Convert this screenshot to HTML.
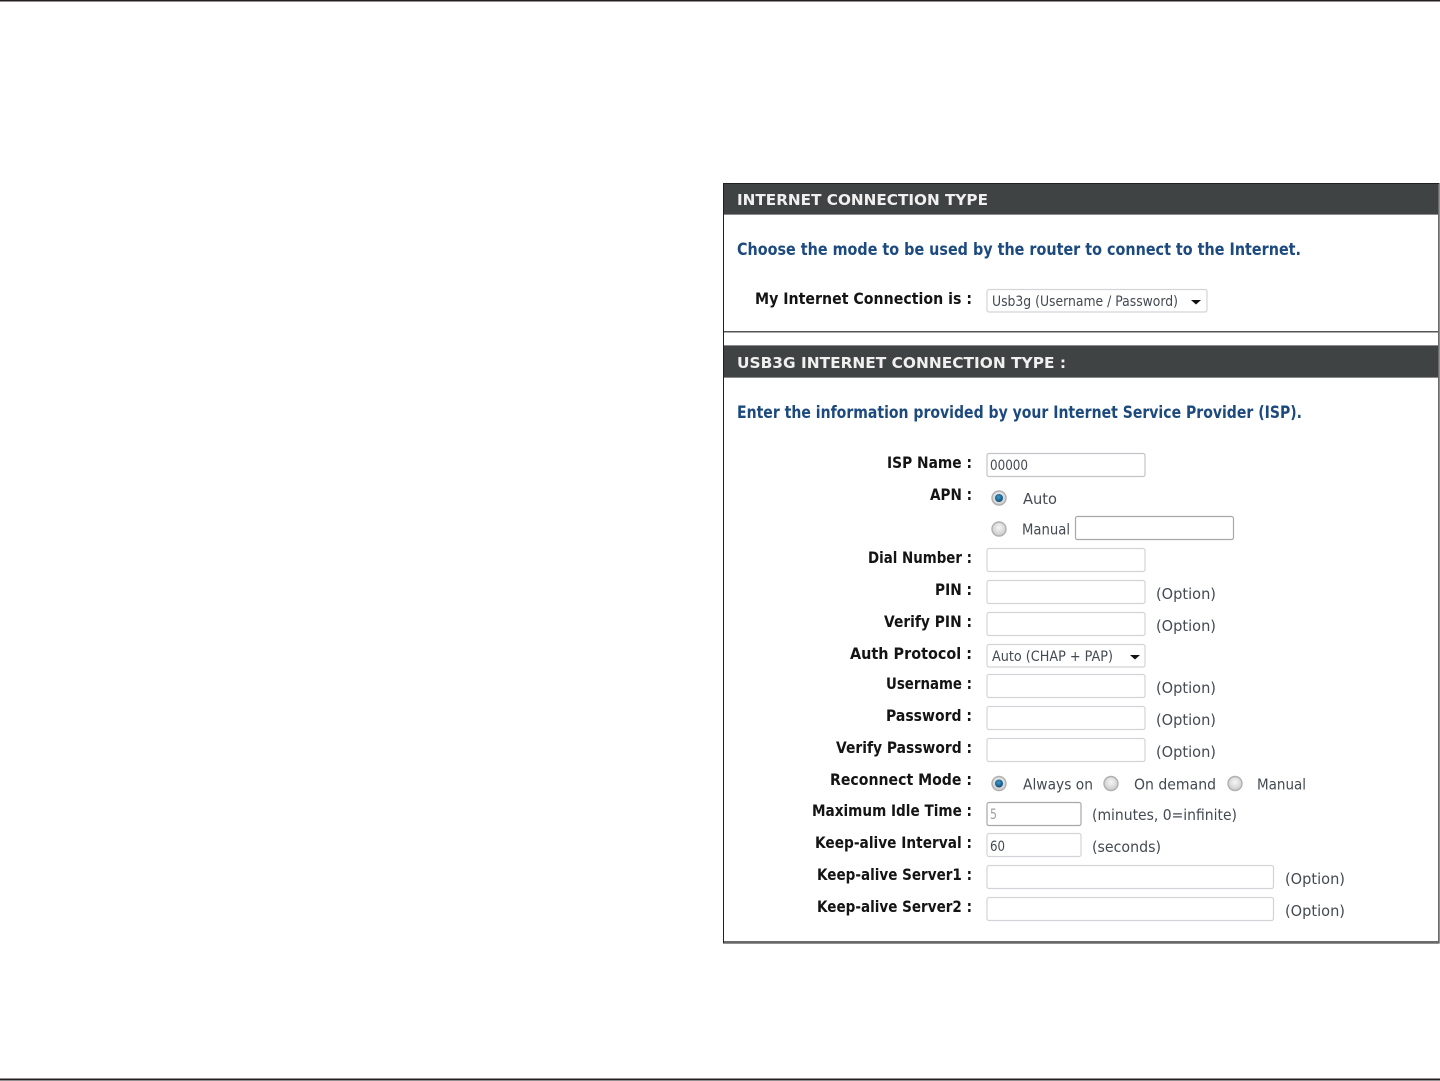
<!DOCTYPE html>
<html><head><meta charset="utf-8"><title>Internet Connection Type</title>
<style>
html,body{margin:0;padding:0;background:#fff;width:1440px;height:1081px;overflow:hidden}
svg{display:block;position:absolute;left:0;top:0;filter:blur(0.35px)}
text{font-family:"DejaVu Sans","Liberation Sans",sans-serif}
.h{font-size:15.5px;font-weight:bold;fill:#f0f0f0}
.b{font-size:16.5px;font-weight:bold;fill:#1d4a7e}
.l{font-size:16px;font-weight:bold;fill:#141414}
.r{font-size:15.5px;fill:#444a52}
.s{font-size:14.5px;fill:#444a52}
.i{fill:#fff;stroke:#d4d4d8;stroke-width:1.2}
.d{fill:#fff;stroke:#a8a8a8;stroke-width:1.2}
</style></head><body>
<svg width="1440" height="1081" viewBox="0 0 1440 1081" xmlns="http://www.w3.org/2000/svg">
<defs>
<radialGradient id="off" cx="50%" cy="40%" r="55%"><stop offset="0" stop-color="#f6f6f6"/><stop offset="1" stop-color="#cdcdcd"/></radialGradient>
<radialGradient id="dot" cx="45%" cy="40%" r="60%"><stop offset="0" stop-color="#3f9bd0"/><stop offset="1" stop-color="#0e4a78"/></radialGradient>
</defs>
<rect x="0" y="0" width="1440" height="1.5" fill="#231f20"/>
<rect x="0" y="1078.5" width="1440" height="2" fill="#231f20"/>

<rect x="723.5" y="183.5" width="715.5" height="759.5" fill="#fff" stroke="#231f20" stroke-width="1"/>
<rect x="724" y="184" width="715" height="30" fill="#404343"/>
<rect x="724" y="214" width="715" height="1" fill="#8a8a8a"/>
<rect x="724" y="331" width="715" height="1.5" fill="#555"/>
<rect x="724" y="332.5" width="715" height="13" fill="#fff"/>
<rect x="724" y="345.5" width="715" height="32" fill="#404343"/>
<rect x="724" y="345" width="715" height="1" fill="#8a8a8a"/>
<rect x="724" y="377" width="715" height="1" fill="#8a8a8a"/>
<rect x="724" y="941" width="715" height="2" fill="#6a6a6a"/>
<rect x="1438" y="184" width="1" height="759" fill="#6a6a6a"/>

<text class="h" x="737" y="205" textLength="251" lengthAdjust="spacingAndGlyphs">INTERNET CONNECTION TYPE</text>
<text class="h" x="737" y="368" textLength="329" lengthAdjust="spacingAndGlyphs">USB3G INTERNET CONNECTION TYPE :</text>
<text class="b" x="737" y="255" textLength="564" lengthAdjust="spacingAndGlyphs">Choose the mode to be used by the router to connect to the Internet.</text>
<text class="b" x="737" y="418" textLength="565" lengthAdjust="spacingAndGlyphs">Enter the information provided by your Internet Service Provider (ISP).</text>

<text class="l" x="755" y="304" textLength="217" lengthAdjust="spacingAndGlyphs">My Internet Connection is :</text>
<text class="l" x="887" y="468" textLength="85" lengthAdjust="spacingAndGlyphs">ISP Name :</text>
<text class="l" x="930" y="500" textLength="42" lengthAdjust="spacingAndGlyphs">APN :</text>
<text class="l" x="868" y="563" textLength="104" lengthAdjust="spacingAndGlyphs">Dial Number :</text>
<text class="l" x="935" y="595" textLength="37" lengthAdjust="spacingAndGlyphs">PIN :</text>
<text class="l" x="884" y="627" textLength="88" lengthAdjust="spacingAndGlyphs">Verify PIN :</text>
<text class="l" x="850" y="659" textLength="122" lengthAdjust="spacingAndGlyphs">Auth Protocol :</text>
<text class="l" x="886" y="689" textLength="86" lengthAdjust="spacingAndGlyphs">Username :</text>
<text class="l" x="886" y="721" textLength="86" lengthAdjust="spacingAndGlyphs">Password :</text>
<text class="l" x="836" y="753" textLength="136" lengthAdjust="spacingAndGlyphs">Verify Password :</text>
<text class="l" x="830" y="785" textLength="142" lengthAdjust="spacingAndGlyphs">Reconnect Mode :</text>
<text class="l" x="812" y="816" textLength="160" lengthAdjust="spacingAndGlyphs">Maximum Idle Time :</text>
<text class="l" x="815" y="848" textLength="157" lengthAdjust="spacingAndGlyphs">Keep-alive Interval :</text>
<text class="l" x="817" y="880" textLength="155" lengthAdjust="spacingAndGlyphs">Keep-alive Server1 :</text>
<text class="l" x="817" y="912" textLength="155" lengthAdjust="spacingAndGlyphs">Keep-alive Server2 :</text>

<rect class="i" x="987" y="289.5" width="220" height="22.5" rx="2"/>
<text class="s" x="992" y="306" textLength="186" lengthAdjust="spacingAndGlyphs">Usb3g (Username / Password)</text>
<path d="M1191 300h10l-5 4.5z" fill="#111"/>

<rect class="d" x="987" y="453.5" width="158" height="23" rx="2" style="stroke:#c4c4c8"/>
<text class="s" x="990" y="470" textLength="38" lengthAdjust="spacingAndGlyphs">00000</text>
<rect class="d" x="1075.5" y="516.5" width="158" height="23" rx="2"/>
<rect class="i" x="987" y="548.5" width="158" height="23" rx="2"/>
<rect class="i" x="987" y="580.5" width="158" height="23" rx="2"/>
<rect class="i" x="987" y="612.5" width="158" height="23" rx="2"/>
<rect class="i" x="987" y="644.5" width="158" height="22.5" rx="2"/>
<text class="s" x="992" y="661" textLength="121" lengthAdjust="spacingAndGlyphs">Auto (CHAP + PAP)</text>
<path d="M1130 655h10l-5 4.5z" fill="#111"/>
<rect class="i" x="987" y="674.5" width="158" height="23" rx="2"/>
<rect class="i" x="987" y="706.5" width="158" height="23" rx="2"/>
<rect class="i" x="987" y="738.5" width="158" height="23" rx="2"/>
<rect class="d" x="987" y="802.5" width="94" height="23" rx="2"/>
<text class="s" x="990" y="819" textLength="7" lengthAdjust="spacingAndGlyphs" style="fill:#a0a0a0">5</text>
<rect class="i" x="987" y="833.5" width="94" height="23" rx="2"/>
<text class="s" x="990" y="851" textLength="15" lengthAdjust="spacingAndGlyphs">60</text>
<rect class="i" x="987" y="865.5" width="286.5" height="23" rx="2"/>
<rect class="i" x="987" y="897.5" width="286.5" height="23" rx="2"/>

<circle cx="999" cy="498" r="7" fill="url(#off)" stroke="#b0b0b0" stroke-width="1.4"/><circle cx="999" cy="498" r="4" fill="url(#dot)"/>
<circle cx="999" cy="529" r="7" fill="url(#off)" stroke="#b0b0b0" stroke-width="1.4"/>
<circle cx="999" cy="783.5" r="7" fill="url(#off)" stroke="#b0b0b0" stroke-width="1.4"/><circle cx="999" cy="783.5" r="4" fill="url(#dot)"/>
<circle cx="1111" cy="783.5" r="7" fill="url(#off)" stroke="#b0b0b0" stroke-width="1.4"/>
<circle cx="1235" cy="783.5" r="7" fill="url(#off)" stroke="#b0b0b0" stroke-width="1.4"/>

<text class="r" x="1023" y="504" textLength="34" lengthAdjust="spacingAndGlyphs">Auto</text>
<text class="r" x="1022" y="534.5" textLength="48" lengthAdjust="spacingAndGlyphs">Manual</text>
<text class="r" x="1023" y="789.5" textLength="70" lengthAdjust="spacingAndGlyphs">Always on</text>
<text class="r" x="1134" y="789.5" textLength="82" lengthAdjust="spacingAndGlyphs">On demand</text>
<text class="r" x="1257" y="789.5" textLength="49" lengthAdjust="spacingAndGlyphs">Manual</text>
<text class="r" x="1156" y="599" textLength="60" lengthAdjust="spacingAndGlyphs">(Option)</text>
<text class="r" x="1156" y="631" textLength="60" lengthAdjust="spacingAndGlyphs">(Option)</text>
<text class="r" x="1156" y="693" textLength="60" lengthAdjust="spacingAndGlyphs">(Option)</text>
<text class="r" x="1156" y="725" textLength="60" lengthAdjust="spacingAndGlyphs">(Option)</text>
<text class="r" x="1156" y="757" textLength="60" lengthAdjust="spacingAndGlyphs">(Option)</text>
<text class="r" x="1092" y="820" textLength="145" lengthAdjust="spacingAndGlyphs">(minutes, 0=infinite)</text>
<text class="r" x="1092" y="852" textLength="69" lengthAdjust="spacingAndGlyphs">(seconds)</text>
<text class="r" x="1285" y="884" textLength="60" lengthAdjust="spacingAndGlyphs">(Option)</text>
<text class="r" x="1285" y="916" textLength="60" lengthAdjust="spacingAndGlyphs">(Option)</text>
</svg>
</body></html>
